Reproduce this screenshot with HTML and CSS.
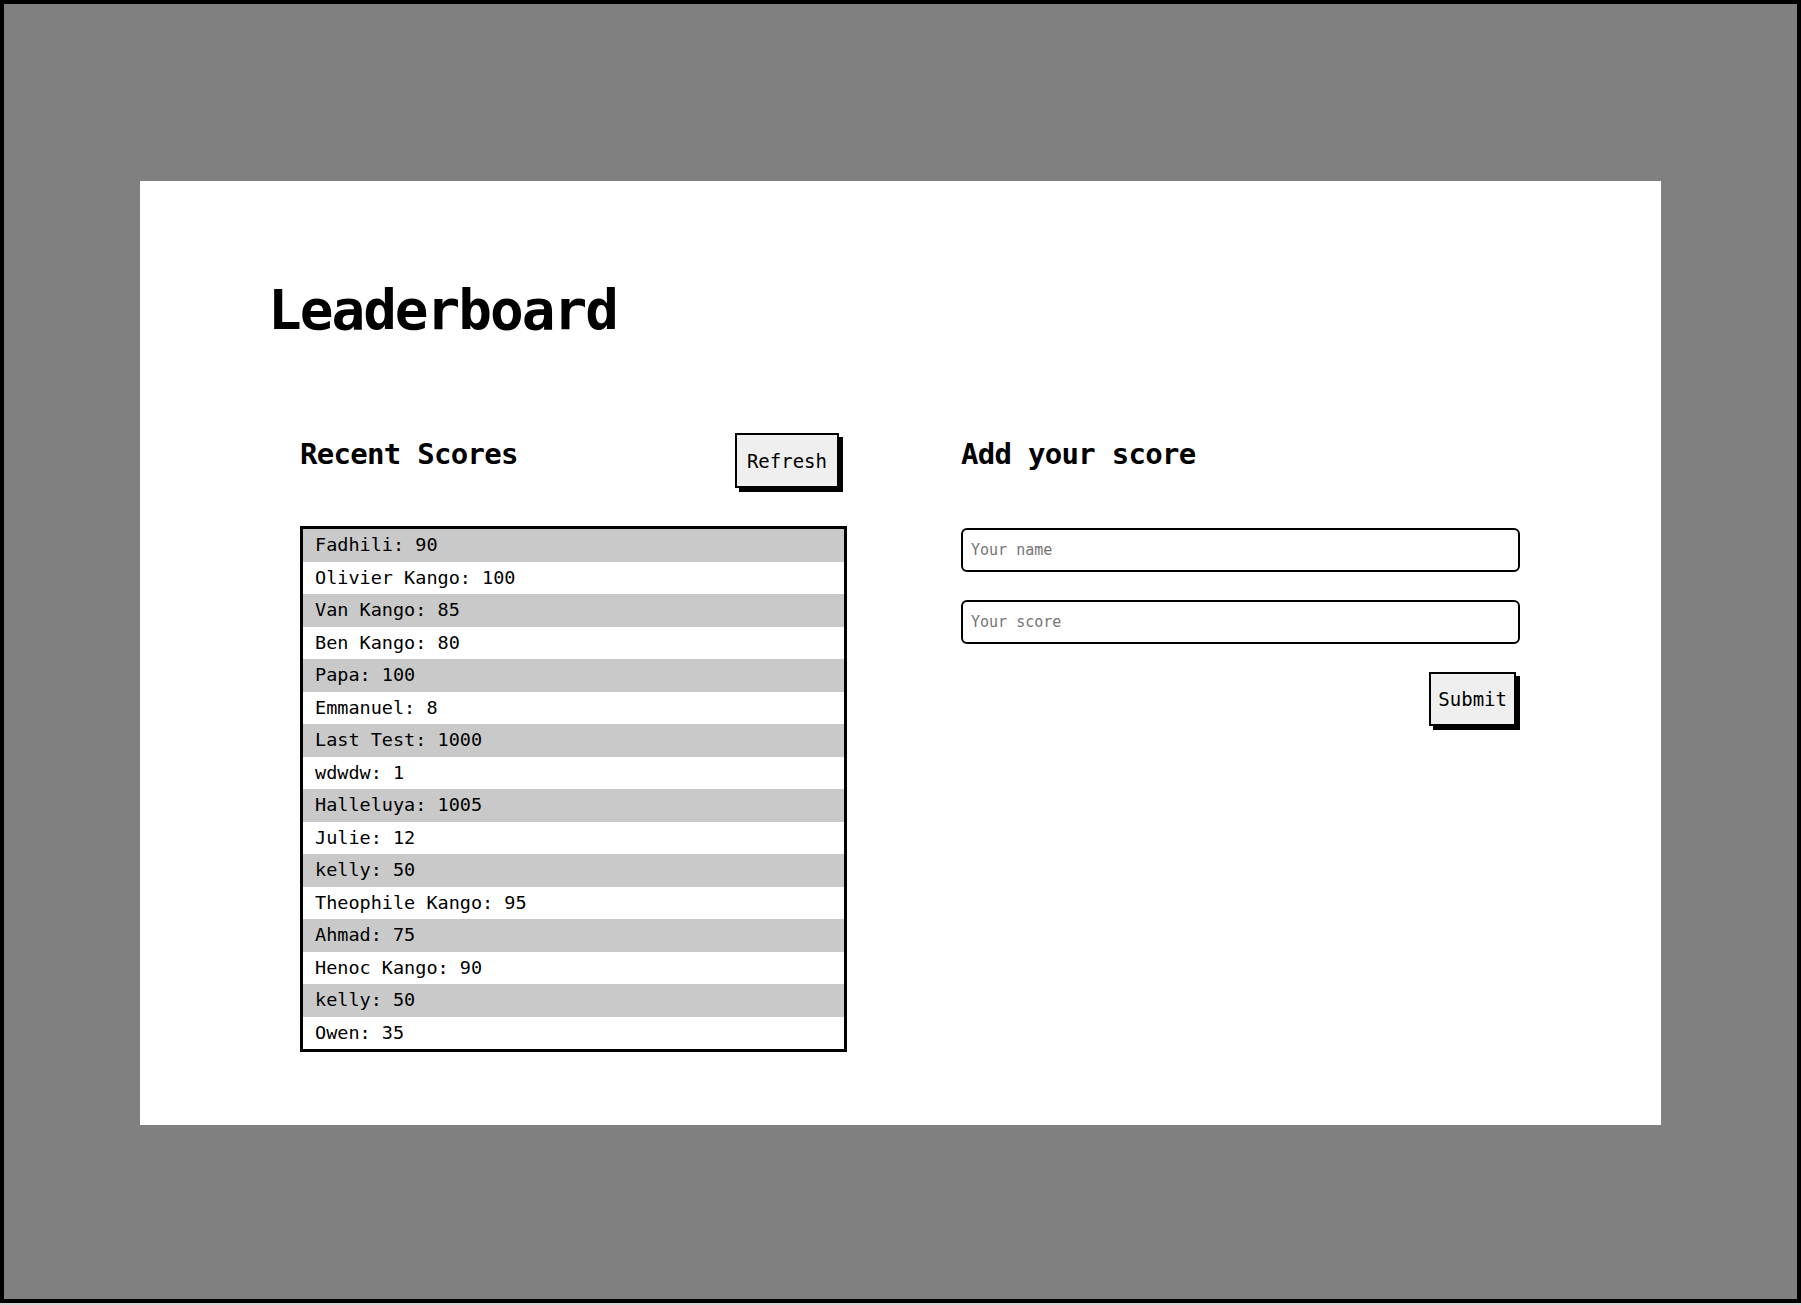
FILE: index.html
```html
<!DOCTYPE html>
<html lang="en">
<head>
<meta charset="utf-8">
<title>Leaderboard</title>
<link rel="stylesheet" href="styles.css">
</head>
<body>
<div class="frame">
  <main class="card">
    <h1 class="title">Leaderboard</h1>
    <div class="board">
      <section class="col-left">
        <div class="col-head">
          <h2 class="subtitle">Recent Scores</h2>
          <button class="btn btn-refresh" type="button">Refresh</button>
        </div>
        <ul class="scores">
          <li>Fadhili: 90</li>
          <li>Olivier Kango: 100</li>
          <li>Van Kango: 85</li>
          <li>Ben Kango: 80</li>
          <li>Papa: 100</li>
          <li>Emmanuel: 8</li>
          <li>Last Test: 1000</li>
          <li>wdwdw: 1</li>
          <li>Halleluya: 1005</li>
          <li>Julie: 12</li>
          <li>kelly: 50</li>
          <li>Theophile Kango: 95</li>
          <li>Ahmad: 75</li>
          <li>Henoc Kango: 90</li>
          <li>kelly: 50</li>
          <li>Owen: 35</li>
        </ul>
      </section>
      <section class="col-right">
        <div class="col-head">
          <h2 class="subtitle">Add your score</h2>
        </div>
        <form class="score-form">
          <input class="field" type="text" placeholder="Your name">
          <input class="field" type="text" placeholder="Your score">
          <button class="btn btn-submit" type="button">Submit</button>
        </form>
      </section>
    </div>
  </main>
</div>
</body>
</html>
```

FILE: styles.css
```css
html {
  background: #d4d4d4;
}

body {
  margin: 0;
  font-family: "DejaVu Sans Mono", "Liberation Mono", monospace;
  color: #000;
}

.frame {
  box-sizing: border-box;
  height: 1303px;
  border: 4px solid #000;
  background: #808080;
  display: flex;
  justify-content: center;
  align-items: flex-start;
  padding-top: 177px;
}

.card {
  box-sizing: border-box;
  width: 1521px;
  height: 944px;
  background: #fff;
  padding: 101px 0 0 128px;
}

.title {
  margin: 0;
  font-size: 56px;
  line-height: 56px;
  font-weight: bold;
  letter-spacing: -2px;
}

.board {
  display: flex;
  gap: 114px;
  margin-top: 95px;
  padding-left: 32px;
}

.col-left {
  width: 547px;
  flex: none;
}

.col-right {
  width: 559px;
  flex: none;
}

.col-head {
  display: flex;
  justify-content: space-between;
  align-items: flex-start;
  height: 55px;
}

.subtitle {
  margin: 0;
  padding-top: 7px;
  font-size: 29px;
  line-height: 29px;
  font-weight: bold;
  letter-spacing: -0.7px;
}

.btn {
  box-sizing: border-box;
  font-family: "DejaVu Sans Mono", "Liberation Mono", monospace;
  font-size: 19px;
  background: #efefef;
  color: #000;
  border: 2px solid #000;
  border-radius: 0;
  box-shadow: 4px 4px 0 #000;
  margin: 0;
  cursor: pointer;
}

.btn-refresh {
  height: 55px;
  padding: 0 10px;
  margin-right: 8px;
}

.scores {
  list-style: none;
  box-sizing: border-box;
  width: 547px;
  margin: 38px 0 0;
  padding: 0;
  border: 3px solid #000;
}

.scores li {
  height: 32.5px;
  line-height: 32.5px;
  padding-left: 12px;
  font-size: 18.5px;
  background: #fff;
}

.scores li:nth-child(odd) {
  background: #c9c9c9;
}

.score-form {
  display: flex;
  flex-direction: column;
  gap: 28px;
  margin-top: 40px;
}

.field {
  box-sizing: border-box;
  width: 559px;
  height: 44px;
  margin: 0;
  border: 2px solid #000;
  border-radius: 6px;
  padding: 0 8px;
  font-family: "DejaVu Sans Mono", "Liberation Mono", monospace;
  font-size: 15px;
  background: #fff;
}

.field::placeholder {
  color: #757575;
}

.btn-submit {
  align-self: flex-end;
  margin-right: 4px;
  height: 54px;
  padding: 0 7px;
}
```
